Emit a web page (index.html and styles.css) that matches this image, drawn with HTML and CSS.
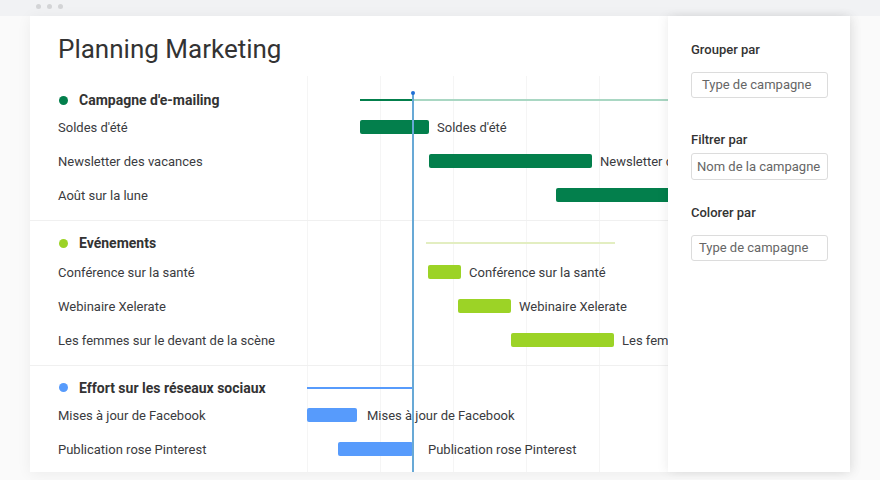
FILE: index.html
```html
<!DOCTYPE html>
<html lang="fr">
<head>
<meta charset="utf-8">
<title>Planning Marketing</title>
<link rel="stylesheet" href="styles.css">
</head>
<body>
<div class="topbar"><span class="wdot"></span><span class="wdot"></span><span class="wdot"></span></div>
<div class="window">
  <main class="board">
    <h1 class="title">Planning Marketing</h1>
    <div class="groups">
      <div class="today"></div>
      <section class="group green first">
        <div class="row head">
          <div class="label"><span class="gdot"></span>Campagne d'e-mailing</div>
          <div class="track"><span class="sum" style="margin-left:53px;width:53px"></span><span class="sum pale" style="width:400px"></span></div>
        </div>
        <div class="row">
          <div class="label">Soldes d'été</div>
          <div class="track"><span class="bar" style="margin-left:53px;width:69px"></span><span class="blabel">Soldes d'été</span></div>
        </div>
        <div class="row">
          <div class="label">Newsletter des vacances</div>
          <div class="track"><span class="bar" style="margin-left:122px;width:163px"></span><span class="blabel">Newsletter des vacances</span></div>
        </div>
        <div class="row">
          <div class="label">Août sur la lune</div>
          <div class="track"><span class="bar" style="margin-left:249px;width:130px"></span><span class="blabel">Août sur la lune</span></div>
        </div>
      </section>
      <section class="group lime">
        <div class="row head">
          <div class="label"><span class="gdot"></span>Evénements</div>
          <div class="track"><span class="sum pale" style="margin-left:119px;width:189px"></span></div>
        </div>
        <div class="row">
          <div class="label">Conférence sur la santé</div>
          <div class="track"><span class="bar" style="margin-left:121px;width:33px"></span><span class="blabel">Conférence sur la santé</span></div>
        </div>
        <div class="row">
          <div class="label">Webinaire Xelerate</div>
          <div class="track"><span class="bar" style="margin-left:151px;width:53px"></span><span class="blabel">Webinaire Xelerate</span></div>
        </div>
        <div class="row">
          <div class="label">Les femmes sur le devant de la scène</div>
          <div class="track"><span class="bar" style="margin-left:204px;width:103px"></span><span class="blabel">Les femmes sur le devant de la scène</span></div>
        </div>
      </section>
      <section class="group blue last">
        <div class="row head">
          <div class="label"><span class="gdot"></span>Effort sur les réseaux sociaux</div>
          <div class="track"><span class="sum" style="width:106px"></span></div>
        </div>
        <div class="row">
          <div class="label">Mises à jour de Facebook</div>
          <div class="track"><span class="bar" style="width:50px"></span><span class="blabel wide">Mises à jour de Facebook</span></div>
        </div>
        <div class="row">
          <div class="label">Publication rose Pinterest</div>
          <div class="track"><span class="bar" style="margin-left:31px;width:75px"></span><span class="blabel far">Publication rose Pinterest</span></div>
        </div>
      </section>
    </div>
  </main>
  <aside class="panel">
    <div class="plabel l1">Grouper par</div>
    <div class="field f1">Type de campagne</div>
    <div class="plabel l2">Filtrer par</div>
    <div class="field f2">Nom de la campagne</div>
    <div class="plabel l3">Colorer par</div>
    <div class="field f3">Type de campagne</div>
  </aside>
</div>
</body>
</html>
```
FILE: styles.css
```css
* { box-sizing: border-box; }
html, body { margin: 0; padding: 0; }
body {
  width: 880px;
  height: 480px;
  overflow: hidden;
  font-family: Roboto, "Liberation Sans", Arial, sans-serif;
  color: #323338;
  background: #fafafa;
}
.topbar {
  height: 16px;
  background: #f1f2f4;
  display: flex;
  align-items: center;
  gap: 6px;
  padding: 0 0 4px 36px;
}
.wdot {
  width: 5px;
  height: 5px;
  border-radius: 50%;
  background: #d3d4d6;
}
.window {
  margin-left: 30px;
  width: 820px;
  height: 456px;
  display: flex;
  background: #fff;
  box-shadow: 0 2px 14px rgba(0, 0, 0, 0.06);
}
.board {
  width: 638px;
  overflow: hidden;
  position: relative;
}
.title {
  margin: 0;
  padding: 17px 0 0 28px;
  height: 60px;
  font-size: 26px;
  line-height: 32px;
  font-weight: 400;
  color: #333;
}
.groups {
  position: relative;
  background-image: repeating-linear-gradient(to right, #f5f5f5 0, #f5f5f5 1px, transparent 1px, transparent 73px);
  background-position: 277px 0;
  background-repeat: repeat-y;
  background-size: 361px 100%;
  padding-top: 10px;
}
.today {
  position: absolute;
  left: 382px;
  top: 17px;
  height: 400px;
  width: 1.5px;
  background: #68a9d6;
  z-index: 2;
}
.today::before {
  content: "";
  position: absolute;
  left: -1.5px;
  top: -2px;
  width: 4px;
  height: 4px;
  border-radius: 50%;
  background: #1f6fd6;
}
.group {
  padding: 0 0 8px;
  border-bottom: 1px solid #f0f0f0;
}
.group + .group { padding-top: 10px; }
.group.last { border-bottom: 0; }
.row {
  display: flex;
  height: 34px;
  align-items: center;
}
.row.head { height: 24px; }
.first .row.head { padding-top: 4px; }
.last .row.head { height: 22px; padding-top: 1px; }
.label {
  width: 277px;
  flex: none;
  padding-left: 28px;
  font-size: 13px;
  color: #3a3b40;
  white-space: nowrap;
  display: flex;
  align-items: center;
}
.head .label {
  font-size: 14px;
  font-weight: 700;
  color: #333;
}
.gdot {
  width: 9px;
  height: 9px;
  border-radius: 50%;
  margin: 0 11px 0 1px;
}
.track {
  flex: 1;
  height: 100%;
  display: flex;
  align-items: center;
  white-space: nowrap;
  overflow: hidden;
}
.bar {
  flex: none;
  height: 14px;
  border-radius: 2px;
}
.sum {
  flex: none;
  height: 2px;
}
.blabel {
  margin-left: 8px;
  font-size: 13px;
  color: #3a3b40;
}
.blabel.wide { margin-left: 10px; }
.blabel.far { margin-left: 15px; }
.green .gdot, .green .bar, .green .sum { background: #037f4c; }
.green .sum.pale { background: #a9d7c3; }
.lime .gdot, .lime .bar { background: #9cd326; }
.lime .sum.pale { background: #e3eec1; }
.blue .gdot, .blue .bar, .blue .sum { background: #579bfc; }
.panel {
  width: 182px;
  flex: none;
  padding: 25px 0 0 23px;
  background: #fff;
  box-shadow: -3px 0 10px rgba(0, 0, 0, 0.05), 4px 0 10px rgba(0, 0, 0, 0.05);
  position: relative;
  z-index: 3;
}
.plabel {
  font-size: 13px;
  font-weight: 500;
  line-height: 18px;
  color: #333;
}
.field {
  width: 137px;
  height: 26px;
  border: 1px solid #dcdcdc;
  border-radius: 3px;
  font-size: 13px;
  line-height: 24px;
  color: #666;
  white-space: nowrap;
  overflow: hidden;
}
.l1 + .field { margin-top: 13px; }
.f1 { padding-left: 10px; }
.l2 { margin-top: 33px; }
.f2 { margin-top: 4px; height: 27px; line-height: 25px; padding-left: 5px; }
.l3 { margin-top: 24px; }
.f3 { margin-top: 13px; padding-left: 7px; }
```
